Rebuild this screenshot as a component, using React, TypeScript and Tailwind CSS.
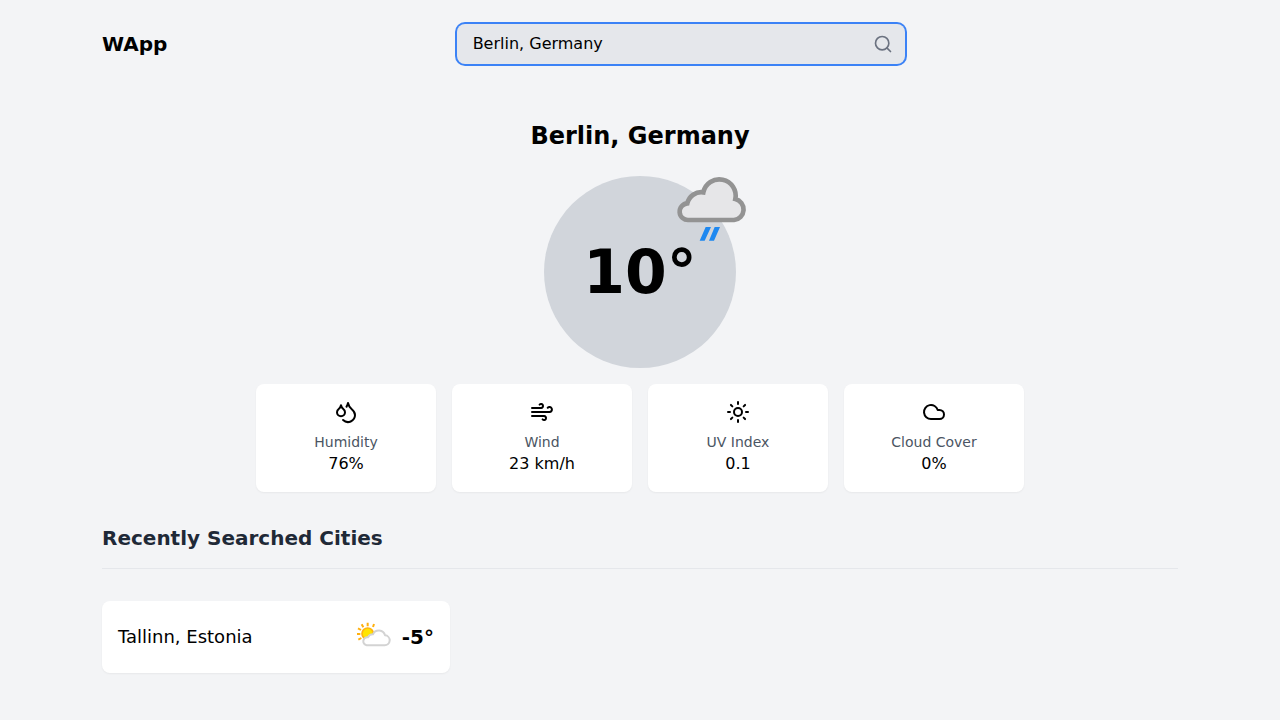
import type { ComponentType } from "react";
import { Cloud, Droplets, Search, Sun } from "lucide-react";

type IconProps = { size?: number };
type Stat = { label: string; value: string; icon: ComponentType<IconProps> };

function Wind({ size = 24 }: IconProps) {
  return (
    <svg
      width={size}
      height={size}
      viewBox="0 0 24 24"
      fill="none"
      stroke="currentColor"
      strokeWidth="2"
      strokeLinecap="round"
      strokeLinejoin="round"
      aria-hidden="true"
    >
      <path d="M17.7 7.7a2.5 2.5 0 1 1 1.8 4.3H2" />
      <path d="M9.6 4.6A2 2 0 1 1 11 8H2" />
      <path d="M12.6 19.4A2 2 0 1 0 14 16H2" />
    </svg>
  );
}

const stats: Stat[] = [
  { label: "Humidity", value: "76%", icon: Droplets },
  { label: "Wind", value: "23 km/h", icon: Wind },
  { label: "UV Index", value: "0.1", icon: Sun },
  { label: "Cloud Cover", value: "0%", icon: Cloud },
];

const recentCities = [{ name: "Tallinn, Estonia", temperature: "-5°" }];

function RainCloud({ className }: { className: string }) {
  return (
    <svg viewBox="36 9 240 240" className={className} role="img" aria-label="Light rain">
      <path
        d="M86 165 A25 25 0 0 1 82 115 A43 43 0 0 1 130 82 A49 49 0 0 1 226 102 A32 32 0 0 1 222 165 Z"
        fill="#e6e6e8"
        stroke="#939393"
        strokeWidth="14"
        strokeLinejoin="miter"
      />
      <path d="M137 186 H153 L134 227 H119 Z M164 186 H180 L162 227 H147 Z" fill="#1e88f0" />
    </svg>
  );
}

function PartlyCloudy({ className }: { className: string }) {
  return (
    <svg viewBox="27 21 120 120" className={className} role="img" aria-label="Partly cloudy">
      <path
        d="M68 38 V49 M50 43 L55 52 M87 42 L84 51 M39 55 L48 60 M36 72 H46 M40 89 L49 84"
        stroke="#ffb00f"
        strokeWidth="6"
      />
      <circle cx="68" cy="71" r="17" fill="#ffe500" stroke="#ffb310" strokeWidth="5" />
      <path
        d="M65 106 A12 12 0 0 1 69 82 A16 16 0 0 1 84 73 A19 19 0 0 1 120 76 A15 15 0 0 1 118 106 Z"
        fill="#ffffff"
        stroke="#d3d3d3"
        strokeWidth="6"
        strokeLinejoin="round"
      />
    </svg>
  );
}

function StatCard({ label, value, icon: Icon }: Stat) {
  return (
    <div className="flex flex-col items-center rounded-lg bg-white p-4 shadow-xs">
      <Icon size={24} />
      <p className="mt-2 text-sm text-[#4b5563]">{label}</p>
      <p>{value}</p>
    </div>
  );
}

export default function App() {
  return (
    <div className="min-h-screen bg-[#f3f4f6] px-4 pb-8 font-['DejaVu_Sans',sans-serif] text-base text-black md:px-[102px]">
      <header className="flex items-center gap-4 py-6">
        <h1 className="text-xl font-bold">WApp</h1>
        <form className="flex flex-1 justify-center" onSubmit={(e) => e.preventDefault()}>
          <div className="relative w-full max-w-md">
            <input
              type="text"
              aria-label="Search city"
              defaultValue="Berlin, Germany"
              className="block w-full rounded-lg bg-[#e5e7eb] py-2 pr-10 pl-4 ring-2 ring-[#3b82f6] outline-none"
            />
            <button
              type="submit"
              aria-label="Search"
              className="absolute inset-y-0 right-3 flex items-center text-[#6b7280]"
            >
              <Search size={20} />
            </button>
          </div>
        </form>
      </header>

      <main>
        <section className="mt-8 flex flex-col items-center">
          <h2 className="text-2xl font-bold">Berlin, Germany</h2>
          <div className="relative mt-6 flex size-48 items-center justify-center rounded-full bg-[#d1d5db]">
            <span className="text-6xl font-bold">10°</span>
            <RainCloud className="absolute -top-2 -right-4 size-20" />
          </div>
          <div className="mt-4 grid w-full max-w-3xl grid-cols-2 gap-4 md:grid-cols-4">
            {stats.map((stat) => (
              <StatCard key={stat.label} {...stat} />
            ))}
          </div>
        </section>

        <section className="mt-8">
          <h2 className="border-b border-[#e5e7eb] pb-4 text-xl font-bold text-[#1f2937]">
            Recently Searched Cities
          </h2>
          <ul className="mt-8 grid gap-4 md:grid-cols-3">
            {recentCities.map((city) => (
              <li
                key={city.name}
                className="flex items-center justify-between rounded-lg bg-white p-4 shadow-xs"
              >
                <span className="text-lg">{city.name}</span>
                <span className="flex items-center gap-2">
                  <PartlyCloudy className="size-10" />
                  <span className="text-xl font-bold">{city.temperature}</span>
                </span>
              </li>
            ))}
          </ul>
        </section>
      </main>
    </div>
  );
}
